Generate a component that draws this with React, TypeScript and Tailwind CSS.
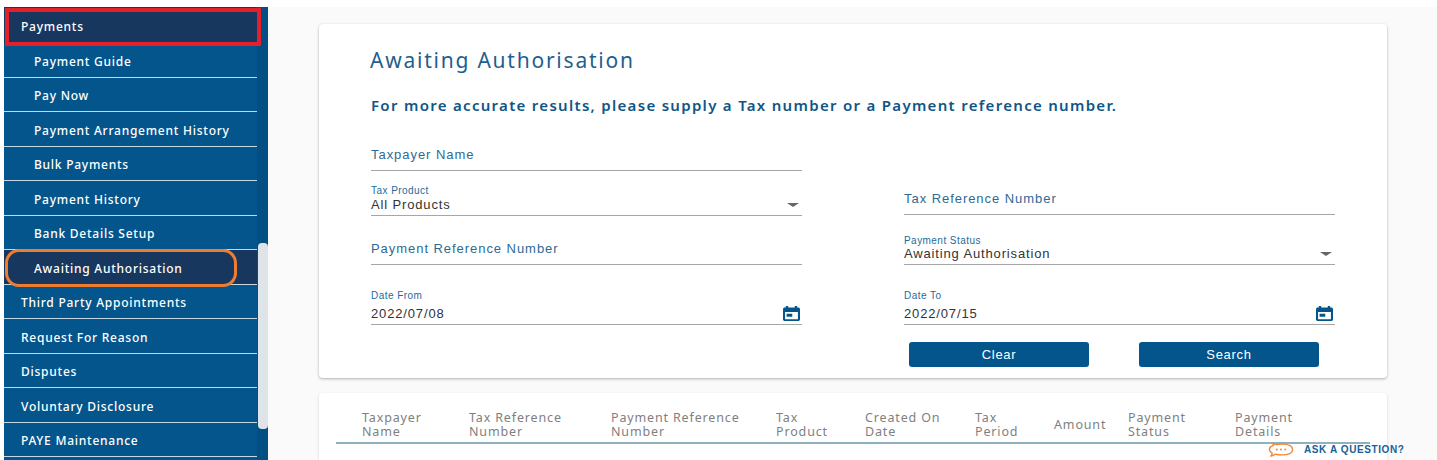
import React from "react";

const sans = "font-['Liberation_Sans',Arial,sans-serif]";
const humanist = "font-['Noto_Sans','Open_Sans',sans-serif]";

const menu = [
  { label: "Payment Guide", sub: true },
  { label: "Pay Now", sub: true },
  { label: "Payment Arrangement History", sub: true },
  { label: "Bulk Payments", sub: true },
  { label: "Payment History", sub: true },
  { label: "Bank Details Setup", sub: true },
  { label: "Awaiting Authorisation", sub: true, active: true },
  { label: "Third Party Appointments" },
  { label: "Request For Reason" },
  { label: "Disputes" },
  { label: "Voluntary Disclosure" },
  { label: "PAYE Maintenance" },
];

function CalendarIcon() {
  return (
    <svg viewBox="3 1 18 20" preserveAspectRatio="none" className="mr-[2px] w-[17px] h-[15px] text-[#03558c]" aria-hidden="true">
      <path
        fill="currentColor"
        fillRule="evenodd"
        d="M6 1h2.5v2h7V1H18v2h1c1.1 0 2 .9 2 2v14c0 1.1-.9 2-2 2H5c-1.1 0-2-.9-2-2V5c0-1.1.9-2 2-2h1V1zM5.2 9v9.8h13.6V9H5.2zm1.6 2.2h6v4.2h-6v-4.2z"
      />
    </svg>
  );
}

function Caret() {
  return <span className="mr-[3px] w-0 h-0 border-x-[6px] border-x-transparent border-t-[4px] border-t-[#666]" />;
}

function Field({
  label,
  value,
  placeholder,
  end,
  valueClass = "",
}: {
  label?: string;
  value?: string;
  placeholder?: string;
  end?: React.ReactNode;
  valueClass?: string;
}) {
  return (
    <div className={`border-b border-[#a6a6a6] ${sans}`}>
      {label && <div className="text-[10px] leading-[11px] text-[#1f6a9c] tracking-[0.45px]">{label}</div>}
      <div className={`flex items-center justify-between ${valueClass}`}>
        {placeholder ? (
          <span className="text-[13px] leading-[16px] tracking-[0.95px] text-[#2e6a94]">{placeholder}</span>
        ) : (
          <span className="text-[13px] leading-[14px] tracking-[0.85px] text-[#333]">{value}</span>
        )}
        {end}
      </div>
    </div>
  );
}

const columns = [
  { w: "w-[107px]", lines: ["Taxpayer", "Name"] },
  { w: "w-[142px]", lines: ["Tax Reference", "Number"] },
  { w: "w-[165px]", lines: ["Payment Reference", "Number"] },
  { w: "w-[89px]", lines: ["Tax", "Product"] },
  { w: "w-[110px]", lines: ["Created On", "Date"] },
  { w: "w-[79px]", lines: ["Tax", "Period"] },
  { w: "w-[74px]", lines: ["Amount"] },
  { w: "w-[107px]", lines: ["Payment", "Status"] },
  { w: "w-[100px]", lines: ["Payment", "Details"] },
];

export default function App() {
  return (
    <div className="relative w-[1437px] h-[460px] overflow-hidden bg-white pt-[7px]">
      <div className="flex h-[453px] bg-[#fafafa]">
        <div className="w-1 bg-white shrink-0" />
        <aside className={`relative flex w-[264px] shrink-0 bg-[#034f83] text-white ${humanist}`}>
          <nav className="w-[253px] bg-[#03558c]">
            <div className="h-[36px] bg-[#17375e] pl-[17px] pt-[3px] flex items-center text-[12px] font-medium tracking-[0.75px]">Payments</div>
            {menu.map((m) => (
              <div
                key={m.label}
                className={`h-[34.5px] pt-[4px] flex items-center border-b border-[#c5d8e6] text-[12px] font-medium tracking-[0.75px] ${
                  m.sub ? "pl-[30px]" : "pl-[17px]"
                } ${m.active ? "bg-[#17375e]" : ""}`}
              >
                {m.label}
              </div>
            ))}
          </nav>
          <div className="absolute left-[254px] top-[236px] w-[10px] h-[186px] rounded-[4px] bg-[#dfe4e8]" />
          <div className="absolute left-[1px] top-[1px] w-[256px] h-[38px] border-[4px] border-[#e3202c]" />
          <div className="absolute left-[1px] top-[242px] w-[232px] h-[38px] border-[3px] border-[#ee7d31] rounded-[14px]" />
        </aside>

        <main className="flex-1 pl-[51px] pt-[17px]">
          <section className="w-[1068px] h-[354px] bg-white rounded-[4px] shadow-[0_1px_3px_rgba(0,0,0,0.3)] pl-[52px] pr-[52px] pt-[23px]">
            <h1 className={`-ml-[1px] text-[21px] leading-[26px] tracking-[1.77px] text-[#1e5f8f] ${humanist}`}>Awaiting Authorisation</h1>
            <p className={`mt-[23px] text-[15px] leading-[18px] font-semibold tracking-[1.3px] text-[#0f5687] ${humanist}`}>
              For more accurate results, please supply a Tax number or a Payment reference number.
            </p>
            <div className="mt-[16px] grid grid-cols-[431px_431px] grid-rows-[41px_45px_49px_60px] gap-x-[102px] items-end">
              <Field placeholder="Taxpayer Name" valueClass="pb-[7px]" />
              <div />
              <Field label="Tax Product" value="All Products" end={<Caret />} valueClass="pt-[2px] pb-[3px]" />
              <div className="mb-[1px]">
                <Field placeholder="Tax Reference Number" valueClass="pb-[7px]" />
              </div>
              <Field placeholder="Payment Reference Number" valueClass="pb-[7px]" />
              <Field label="Payment Status" value="Awaiting Authorisation" end={<Caret />} valueClass="pt-[1px] pb-[3px]" />
              <Field label="Date From" value="2022/07/08" end={<CalendarIcon />} valueClass="pt-[5px] pb-[3px]" />
              <Field label="Date To" value="2022/07/15" end={<CalendarIcon />} valueClass="pt-[5px] pb-[3px]" />
            </div>
            <div className={`mt-[17px] flex pl-[538px] gap-[50px] ${sans}`}>
              <button className="w-[180px] h-[25px] rounded-[3px] bg-[#03558c] text-white text-[13px] tracking-[0.7px]">Clear</button>
              <button className="w-[180px] h-[25px] rounded-[3px] bg-[#03558c] text-white text-[13px] tracking-[0.7px]">Search</button>
            </div>
          </section>

          <section className="mt-[15px] w-[1068px] h-[80px] bg-white rounded-[4px] shadow-[0_1px_3px_rgba(0,0,0,0.15)] pl-[17px] pt-[18px]">
            <div className={`w-[1034px] h-[33px] flex pl-[26px] border-b-2 border-[#8fb0bd] text-[12.5px] leading-[13.5px] tracking-[0.85px] text-[#808080] ${humanist}`}>
              {columns.map((c) => (
                <div key={c.lines[0] + c.lines[1]} className={`${c.w} shrink-0 ${c.lines.length === 1 ? "pt-[7px]" : ""}`}>
                  {c.lines.map((l) => (
                    <div key={l}>{l}</div>
                  ))}
                </div>
              ))}
            </div>
          </section>
        </main>
      </div>

      <div className={`absolute left-[1268px] top-[442px] flex items-center gap-[10px] ${sans}`}>
        <svg width="26" height="15" viewBox="0 0 28 18" preserveAspectRatio="none" aria-hidden="true">
          <path d="M5 1.5 L9 3.2 C11 2.6 13 2.5 15 2.5 C22 2.5 26.5 5 26.5 9 C26.5 13 22 15.5 15 15.5 C12 15.5 10 15.2 8 14.5 C7 15.5 5 16.8 3 17 C4 15.8 4.5 14.5 4.5 13.2 C2.5 12 1.5 10.5 1.5 9 C1.5 7 3 5.2 6 4 Z" fill="none" stroke="#ee8a3c" strokeWidth="1.6" strokeLinejoin="round" />
          <circle cx="9.5" cy="9" r="1.1" fill="#ee8a3c" />
          <circle cx="14" cy="9" r="1.1" fill="#ee8a3c" />
          <circle cx="18.5" cy="9" r="1.1" fill="#ee8a3c" />
        </svg>
        <span className="text-[10px] font-bold tracking-[0.6px] text-[#17609a]">ASK A QUESTION?</span>
      </div>
    </div>
  );
}
